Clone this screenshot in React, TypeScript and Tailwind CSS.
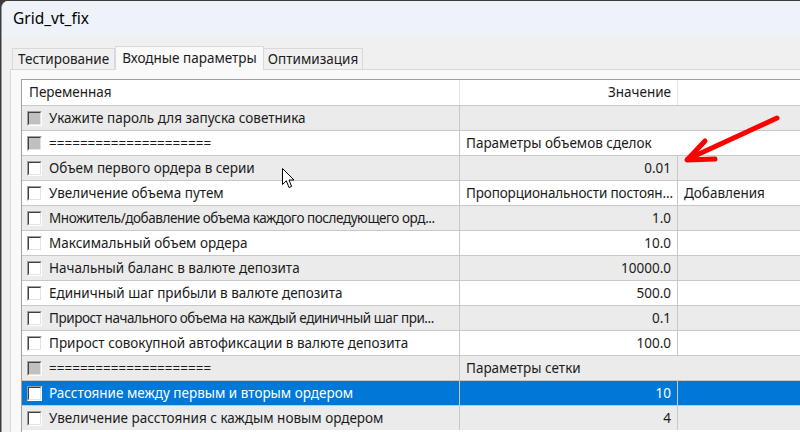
import React from 'react'

type Row = {
  name: string
  value?: string
  extra?: string
  group?: boolean
  selected?: boolean
  left?: boolean
}

const rows: Row[] = [
  { name: 'Укажите пароль для запуска советника', group: true, value: '' },
  { name: '=====================', group: true, value: 'Параметры объемов сделок' },
  { name: 'Объем первого ордера в серии', value: '0.01' },
  { name: 'Увеличение объема путем', value: 'Пропорциональности постоян...', extra: 'Добавления', left: true },
  { name: 'Множитель/добавление объема каждого последующего орд...', value: '1.0' },
  { name: 'Максимальный объем ордера', value: '10.0' },
  { name: 'Начальный баланс в валюте депозита', value: '10000.0' },
  { name: 'Единичный шаг прибыли в валюте депозита', value: '500.0' },
  { name: 'Прирост начального объема на каждый единичный шаг при...', value: '0.1' },
  { name: 'Прирост совокупной автофиксации в валюте депозита', value: '100.0' },
  { name: '=====================', group: true, value: 'Параметры сетки' },
  { name: 'Расстояние между первым и вторым ордером', value: '10', selected: true },
  { name: 'Увеличение расстояния с каждым новым ордером', value: '4' },
]

function Check({ disabled }: { disabled?: boolean }) {
  return (
    <div className="w-[15px] h-[15px] shrink-0 border border-t-[#a0a0a0] border-l-[#a0a0a0] border-r-white border-b-white">
      <div
        className={`w-full h-full border border-t-[#404040] border-l-[#404040] border-r-[#e3e3e3] border-b-[#e3e3e3] ${
          disabled ? 'bg-[#c0c0c0]' : 'bg-white'
        }`}
      />
    </div>
  )
}

export default function App() {
  return (
    <div
      className="relative w-[800px] h-[432px] overflow-hidden bg-[#3b3b3b] pt-[1px] pl-[1px] text-[13.5px] text-[#1b1b1b]"
      style={{ fontFamily: '"Noto Sans", "Liberation Sans", sans-serif' }}
    >
      <div className="flex flex-col h-full rounded-tl-[7px] overflow-hidden bg-[#f0f0f0] border-l border-[#9a9a9a]">
        {/* title bar */}
        <div className="h-[36px] shrink-0 bg-[#eef3fa] flex items-center pl-[11px] text-[15.5px] text-black">
          Grid_vt_fix
        </div>

        {/* tabs */}
        <div className="h-[32px] shrink-0 flex items-end pl-[10px]">
          <div className="h-[21px] px-[5px] flex items-center border border-b-0 border-[#d9d9d9] bg-[#f0f0f0]">
            Тестирование
          </div>
          <div className="h-[24px] px-[6px] flex items-center border border-b-0 border-[#d9d9d9] bg-[#f9f9f9] -mb-px relative z-10">
            Входные параметры
          </div>
          <div className="h-[21px] px-[4px] flex items-center border border-b-0 border-l-0 border-[#d9d9d9] bg-[#f0f0f0]">
            Оптимизация
          </div>
        </div>

        {/* panel */}
        <div className="flex-1 ml-[8px] bg-[#f9f9f9] border-l border-t border-[#d9d9d9] pl-[10px] pt-[9px]">
          <div className="h-full bg-white border-l border-t border-[#a0a0a0]">
            <div className="grid grid-cols-[438px_218px_1fr] h-[25px] bg-white">
              <div className="flex items-center pl-[7px] border-r border-[#e3e3e3]">Переменная</div>
              <div className="flex items-center justify-end pr-[6px] border-r border-[#e3e3e3]">Значение</div>
              <div />
            </div>
            {rows.map((r, i) => {
              const bg = r.selected ? 'bg-[#0078d7] text-white' : i % 2 === 0 ? 'bg-[#ebebeb]' : 'bg-white'
              // truncated names are squeezed a bit so the "..." stays inside the cell
              const cut = r.name.endsWith('...') ? 'tracking-[-0.45px]' : ''
              return (
                <div key={i} className={`grid grid-cols-[438px_218px_1fr] h-[25px] border-t border-[#c8c8c8] ${bg}`}>
                  <div className="flex items-center gap-[7px] pl-[5px] border-r border-[#c8c8c8] whitespace-nowrap overflow-hidden">
                    <Check disabled={r.group} />
                    <span className={cut}>{r.name}</span>
                  </div>
                  {r.group ? (
                    <div className="col-span-2 flex items-center pl-[6px] whitespace-nowrap">{r.value}</div>
                  ) : (
                    <>
                      <div
                        className={`flex items-center border-r border-[#c8c8c8] whitespace-nowrap overflow-hidden ${
                          r.left ? 'pl-[6px] tracking-[-0.15px]' : 'justify-end pr-[6px]'
                        }`}
                      >
                        {r.value}
                      </div>
                      <div className="flex items-center pl-[6px] whitespace-nowrap">{r.extra}</div>
                    </>
                  )}
                </div>
              )
            })}
          </div>
        </div>
      </div>

      {/* mouse pointer */}
      <svg className="absolute left-[282px] top-[168px]" width="14" height="22" viewBox="0 0 14 22">
        <path
          d="M0.5 0.5 L0.5 16.5 L4.3 12.8 L7 19.5 L9.6 18.4 L7 12 L12 12 Z"
          fill="white"
          stroke="black"
          strokeWidth="1"
          strokeLinejoin="miter"
        />
      </svg>

      {/* red arrow */}
      <svg className="absolute left-0 top-0 pointer-events-none" width="800" height="432">
        <g stroke="#ff0000" strokeWidth="5" strokeLinecap="round" strokeLinejoin="round" fill="none">
          <path d="M777 118 L688 159" />
          <path d="M705 141 L687 160 L715 159" />
        </g>
      </svg>
    </div>
  )
}
